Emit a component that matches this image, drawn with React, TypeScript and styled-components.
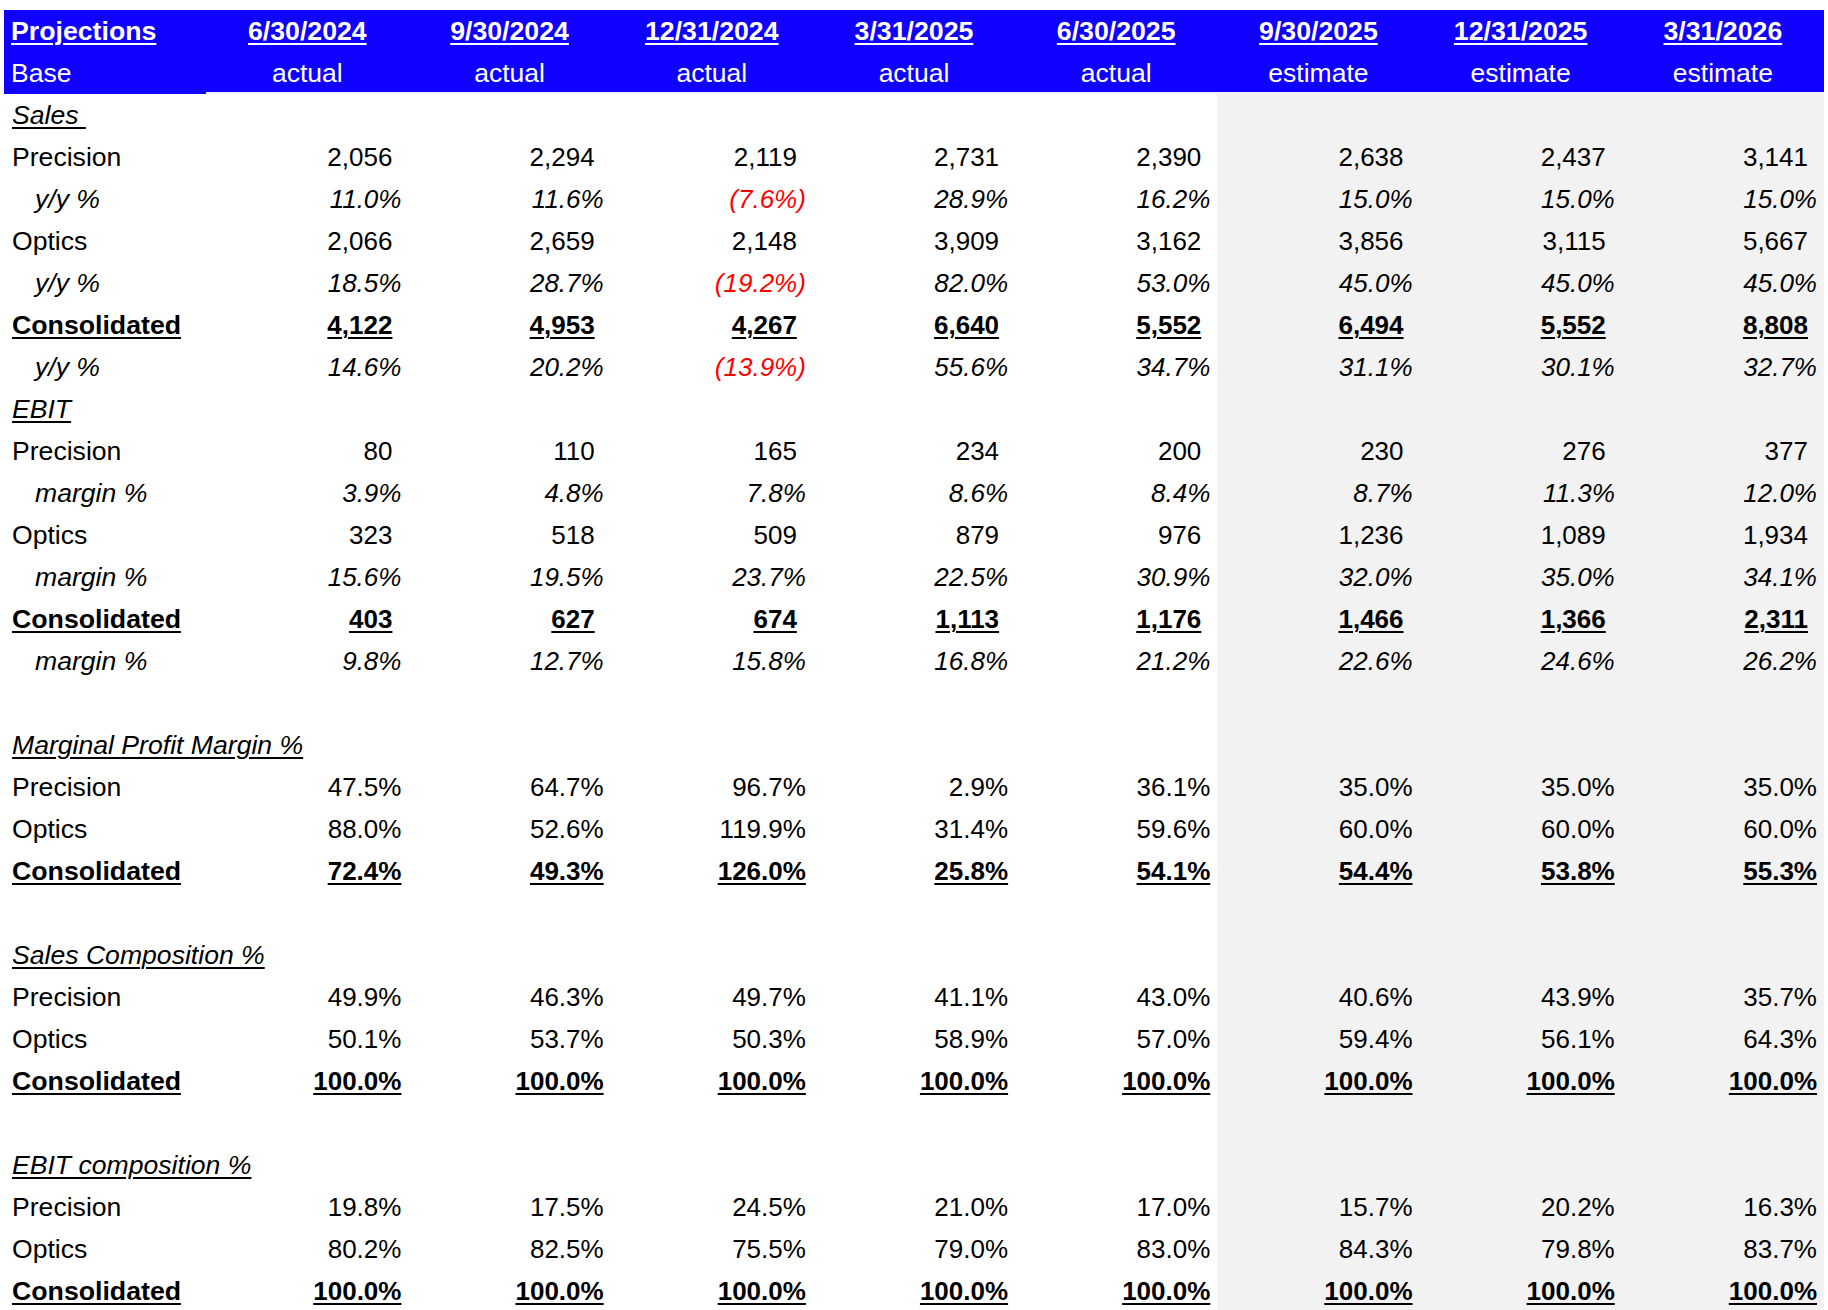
import React from 'react';
import styled, { createGlobalStyle } from 'styled-components';

const GlobalStyle = createGlobalStyle`
    html, body {
        margin: 0;
        background: #ffffff;
    }
    body {
        padding: 10px 4px 0 4px;
        font-family: "Liberation Sans", Arial, sans-serif;
        color: #000000;
    }
`

type Kind = 'num' | 'pct';
type Style = 'plain' | 'italic' | 'total';

type DataRow =
    | { type: 'section'; label: string }
    | { type: 'blank' }
    | { type: 'data'; label: string; kind: Kind; style: Style; indent?: boolean; values: string[] };

const dates = ['6/30/2024', '9/30/2024', '12/31/2024', '3/31/2025', '6/30/2025', '9/30/2025', '12/31/2025', '3/31/2026'];
const status = ['actual', 'actual', 'actual', 'actual', 'actual', 'estimate', 'estimate', 'estimate'];
const ESTIMATE_FROM = 5;

const hundred = Array(8).fill('100.0%');

const rows: DataRow[] = [
    { type: 'section', label: 'Sales ' },
    { type: 'data', label: 'Precision', kind: 'num', style: 'plain', values: ['2,056', '2,294', '2,119', '2,731', '2,390', '2,638', '2,437', '3,141'] },
    { type: 'data', label: 'y/y %', kind: 'pct', style: 'italic', indent: true, values: ['11.0%', '11.6%', '(7.6%)', '28.9%', '16.2%', '15.0%', '15.0%', '15.0%'] },
    { type: 'data', label: 'Optics', kind: 'num', style: 'plain', values: ['2,066', '2,659', '2,148', '3,909', '3,162', '3,856', '3,115', '5,667'] },
    { type: 'data', label: 'y/y %', kind: 'pct', style: 'italic', indent: true, values: ['18.5%', '28.7%', '(19.2%)', '82.0%', '53.0%', '45.0%', '45.0%', '45.0%'] },
    { type: 'data', label: 'Consolidated', kind: 'num', style: 'total', values: ['4,122', '4,953', '4,267', '6,640', '5,552', '6,494', '5,552', '8,808'] },
    { type: 'data', label: 'y/y %', kind: 'pct', style: 'italic', indent: true, values: ['14.6%', '20.2%', '(13.9%)', '55.6%', '34.7%', '31.1%', '30.1%', '32.7%'] },
    { type: 'section', label: 'EBIT' },
    { type: 'data', label: 'Precision', kind: 'num', style: 'plain', values: ['80', '110', '165', '234', '200', '230', '276', '377'] },
    { type: 'data', label: 'margin %', kind: 'pct', style: 'italic', indent: true, values: ['3.9%', '4.8%', '7.8%', '8.6%', '8.4%', '8.7%', '11.3%', '12.0%'] },
    { type: 'data', label: 'Optics', kind: 'num', style: 'plain', values: ['323', '518', '509', '879', '976', '1,236', '1,089', '1,934'] },
    { type: 'data', label: 'margin %', kind: 'pct', style: 'italic', indent: true, values: ['15.6%', '19.5%', '23.7%', '22.5%', '30.9%', '32.0%', '35.0%', '34.1%'] },
    { type: 'data', label: 'Consolidated', kind: 'num', style: 'total', values: ['403', '627', '674', '1,113', '1,176', '1,466', '1,366', '2,311'] },
    { type: 'data', label: 'margin %', kind: 'pct', style: 'italic', indent: true, values: ['9.8%', '12.7%', '15.8%', '16.8%', '21.2%', '22.6%', '24.6%', '26.2%'] },
    { type: 'blank' },
    { type: 'section', label: 'Marginal Profit Margin %' },
    { type: 'data', label: 'Precision', kind: 'pct', style: 'plain', values: ['47.5%', '64.7%', '96.7%', '2.9%', '36.1%', '35.0%', '35.0%', '35.0%'] },
    { type: 'data', label: 'Optics', kind: 'pct', style: 'plain', values: ['88.0%', '52.6%', '119.9%', '31.4%', '59.6%', '60.0%', '60.0%', '60.0%'] },
    { type: 'data', label: 'Consolidated', kind: 'pct', style: 'total', values: ['72.4%', '49.3%', '126.0%', '25.8%', '54.1%', '54.4%', '53.8%', '55.3%'] },
    { type: 'blank' },
    { type: 'section', label: 'Sales Composition %' },
    { type: 'data', label: 'Precision', kind: 'pct', style: 'plain', values: ['49.9%', '46.3%', '49.7%', '41.1%', '43.0%', '40.6%', '43.9%', '35.7%'] },
    { type: 'data', label: 'Optics', kind: 'pct', style: 'plain', values: ['50.1%', '53.7%', '50.3%', '58.9%', '57.0%', '59.4%', '56.1%', '64.3%'] },
    { type: 'data', label: 'Consolidated', kind: 'pct', style: 'total', values: hundred },
    { type: 'blank' },
    { type: 'section', label: 'EBIT composition %' },
    { type: 'data', label: 'Precision', kind: 'pct', style: 'plain', values: ['19.8%', '17.5%', '24.5%', '21.0%', '17.0%', '15.7%', '20.2%', '16.3%'] },
    { type: 'data', label: 'Optics', kind: 'pct', style: 'plain', values: ['80.2%', '82.5%', '75.5%', '79.0%', '83.0%', '84.3%', '79.8%', '83.7%'] },
    { type: 'data', label: 'Consolidated', kind: 'pct', style: 'total', values: hundred },
];

export default function App() {
    return (
        <>
            <GlobalStyle />
            <Sheet>
                <colgroup>
                    {Array.from({ length: 9 }).map((_, i) => <col key={i} />)}
                </colgroup>
                <thead>
                    <tr>
                        <HeadCell $align="left"><Underlined>Projections</Underlined></HeadCell>
                        {dates.map(d => (
                            <HeadCell key={d} $align="center"><Underlined>{d}</Underlined></HeadCell>
                        ))}
                    </tr>
                    <tr>
                        <SubHeadCell $align="left">Base</SubHeadCell>
                        {status.map((s, i) => (
                            <SubHeadCell key={i} $align="center" $edge>{s}</SubHeadCell>
                        ))}
                    </tr>
                </thead>
                <tbody>
                    {rows.map((row, r) => (
                        <Row key={r}>
                            {row.type === 'section' && (
                                <>
                                    <LabelCell><SectionTitle>{row.label}</SectionTitle></LabelCell>
                                    {dates.map((_, i) => <ValueCell key={i} $shade={i >= ESTIMATE_FROM} />)}
                                </>
                            )}
                            {row.type === 'blank' && (
                                <>
                                    <LabelCell />
                                    {dates.map((_, i) => <ValueCell key={i} $shade={i >= ESTIMATE_FROM} />)}
                                </>
                            )}
                            {row.type === 'data' && (
                                <>
                                    <LabelCell $indent={row.indent} $style={row.style}>
                                        {row.style === 'total' ? <Underlined>{row.label}</Underlined> : row.label}
                                    </LabelCell>
                                    {row.values.map((v, i) => (
                                        <ValueCell
                                            key={i}
                                            $shade={i >= ESTIMATE_FROM}
                                            $kind={row.kind}
                                            $style={row.style}
                                            $negative={v.startsWith('(')}
                                        >
                                            {row.style === 'total' ? <Underlined>{v}</Underlined> : v}
                                        </ValueCell>
                                    ))}
                                </>
                            )}
                        </Row>
                    ))}
                </tbody>
            </Sheet>
        </>
    );
}

const Sheet = styled.table`
    width: 1820px;
    table-layout: fixed;
    border-collapse: collapse;
    border-spacing: 0;
    font-size: 26px;

    col {
        width: 202.2px;
    }
`

const HeadCell = styled.th<{ $align: 'left' | 'center' }>`
    height: 42px;
    padding: 0 7px;
    background: #1000ff;
    color: #ffffff;
    font-size: 26.7px;
    font-weight: 700;
    text-align: ${p => p.$align};
    white-space: nowrap;
    line-height: 42px;
`

const SubHeadCell = styled.th<{ $align: 'left' | 'center'; $edge?: boolean }>`
    height: 42px;
    padding: 0 7px;
    background: #1000ff;
    color: #ffffff;
    font-size: 26.5px;
    font-weight: 400;
    text-align: ${p => p.$align};
    white-space: nowrap;
    line-height: 42px;
    box-shadow: ${p => (p.$edge ? 'inset 0 -2px 0 #f3f1f3' : 'none')};
`

const Row = styled.tr`
    height: 42px;
`

const LabelCell = styled.td<{ $indent?: boolean; $style?: Style }>`
    height: 42px;
    padding: 0 7px 0 ${p => (p.$indent ? '31px' : '8px')};
    line-height: 42px;
    white-space: nowrap;
    text-align: left;
    font-size: ${p => (p.$style === 'total' ? '26.7px' : '26.6px')};
    font-weight: ${p => (p.$style === 'total' ? 700 : 400)};
    font-style: ${p => (p.$style === 'italic' ? 'italic' : 'normal')};
`

const ValueCell = styled.td<{ $shade?: boolean; $kind?: Kind; $style?: Style; $negative?: boolean }>`
    height: 42px;
    padding: 0 ${p => (p.$kind === 'num' ? '16px' : '7px')} 0 7px;
    line-height: 42px;
    white-space: nowrap;
    text-align: right;
    background: ${p => (p.$shade ? '#f2f2f2' : 'transparent')};
    color: ${p => (p.$negative ? '#ff0000' : '#000000')};
    font-weight: ${p => (p.$style === 'total' ? 700 : 400)};
    font-style: ${p => (p.$style === 'italic' ? 'italic' : 'normal')};
`

const Underlined = styled.span`
    text-decoration: underline;
    text-decoration-thickness: 2px;
    text-underline-offset: 3px;
`

const SectionTitle = styled.span`
    font-style: italic;
    text-decoration: underline;
    text-decoration-thickness: 2px;
    text-underline-offset: 3px;
    white-space: pre;
`
